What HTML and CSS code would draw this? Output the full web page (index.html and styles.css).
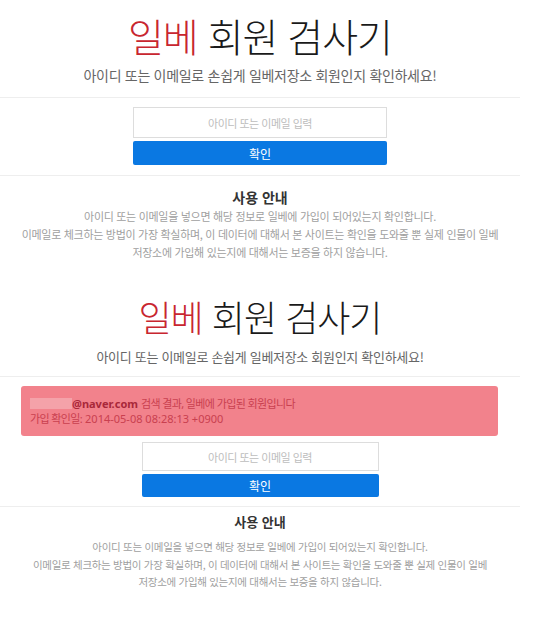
FILE: index.html
```html
<!DOCTYPE html>
<html lang="ko">
<head>
<meta charset="utf-8">
<title>일베 회원 검사기</title>
<link rel="stylesheet" href="styles.css">
</head>
<body>
<div class="page">
  <div class="shot shot-a">
    <header class="hero">
      <h1><span class="red">일베</span> 회원 검사기</h1>
      <p class="subtitle">아이디 또는 이메일로 손쉽게 일베저장소 회원인지 확인하세요!</p>
    </header>
    <form class="search">
      <input class="field" type="text" placeholder="아이디 또는 이메일 입력">
      <button class="btn" type="button">확인</button>
    </form>
    <section class="guide">
      <h2>사용 안내</h2>
      <p>아이디 또는 이메일을 넣으면 해당 정보로 일베에 가입이 되어있는지 확인합니다.<br>이메일로 체크하는 방법이 가장 확실하며, 이 데이터에 대해서 본 사이트는 확인을 도와줄 뿐 실제 인물이 일베<br>저장소에 가입해 있는지에 대해서는 보증을 하지 않습니다.</p>
    </section>
  </div>
  <div class="shot shot-b">
    <header class="hero">
      <h1><span class="red">일베</span> 회원 검사기</h1>
      <p class="subtitle">아이디 또는 이메일로 손쉽게 일베저장소 회원인지 확인하세요!</p>
    </header>
    <div class="alert">
      <div class="alert-line"><span class="redacted"></span><b>@naver.com</b> <span class="ko">검색 결과, 일베에 가입된 회원입니다</span></div>
      <div class="alert-line"><span class="ko">가입 확인일:</span> 2014-05-08 08:28:13 +0900</div>
    </div>
    <form class="search">
      <input class="field" type="text" placeholder="아이디 또는 이메일 입력">
      <button class="btn" type="button">확인</button>
    </form>
    <section class="guide">
      <h2>사용 안내</h2>
      <p>아이디 또는 이메일을 넣으면 해당 정보로 일베에 가입이 되어있는지 확인합니다.<br>이메일로 체크하는 방법이 가장 확실하며, 이 데이터에 대해서 본 사이트는 확인을 도와줄 뿐 실제 인물이 일베<br>저장소에 가입해 있는지에 대해서는 보증을 하지 않습니다.</p>
    </section>
  </div>
</div>
</body>
</html>
```
FILE: styles.css
```css
* { box-sizing: border-box; }
html, body { margin: 0; padding: 0; background: #fff; }
body {
  font-family: "Noto Sans", "Noto Sans CJK KR", sans-serif;
  color: #333;
}
.page { width: 520px; }

.hero { text-align: center; border-bottom: 1px solid #eee; }
.hero h1 {
  margin: 0;
  font-family: "Noto Sans CJK KR", sans-serif;
  font-weight: 300;
  color: #1a1a1a;
  letter-spacing: -1px;
}
.red { color: #c8262f; }
.subtitle {
  margin: 0;
  color: #666;
  font-family: "Noto Sans CJK KR", sans-serif;
}

.search {
  display: flex;
  flex-direction: column;
  align-items: center;
  gap: 3px;
  border-bottom: 1px solid #eee;
}
.field {
  display: block;
  border: 1px solid #ddd;
  background: #fff;
  text-align: center;
  font-family: "Noto Sans CJK KR", sans-serif;
  font-size: 11px;
  letter-spacing: -0.5px;
  outline: none;
  padding: 0;
}
.field::placeholder { color: #bdbdbd; }
.btn {
  display: block;
  border: 0;
  border-radius: 2px;
  background: #0a78e2;
  color: #fff;
  font-family: "Noto Sans CJK KR", sans-serif;
  font-size: 12px;
  padding: 0;
}

.guide { text-align: center; }
.guide h2 {
  margin: 0;
  font-family: "Noto Sans CJK KR", sans-serif;
  font-weight: 700;
  color: #333;
}
.guide p {
  margin: 0;
  color: #a0a0a0;
  font-family: "Noto Sans CJK KR", sans-serif;
  letter-spacing: -0.3px;
}

/* first screenshot */
.shot-a .hero { padding-bottom: 12px; }
.shot-a .hero h1 { font-size: 39px; line-height: 46px; padding-top: 12px; }
.shot-a .subtitle { font-size: 14px; line-height: 20px; margin-top: 7px; letter-spacing: -0.3px; }
.shot-a .search { padding: 9px 0 10px; }
.shot-a .field { width: 254px; height: 31px; }
.shot-a .btn { width: 254px; height: 24px; }
.shot-a .guide { padding-top: 11px; padding-bottom: 6px; }
.shot-a .guide h2 { font-size: 14px; line-height: 20px; }
.shot-a .guide p { font-size: 11px; line-height: 18px; }

/* second screenshot */
.shot-b .hero { padding-bottom: 10px; }
.shot-b .hero h1 { font-size: 36px; line-height: 42px; padding-top: 28px; }
.shot-b .subtitle { font-size: 13px; line-height: 18px; margin-top: 11px; letter-spacing: -0.3px; }
.alert {
  margin: 9px 22px 0 21px;
  padding: 10px 9px;
  background: #f2828c;
  border-radius: 3px;
  color: #c9404f;
  font-size: 11px;
  line-height: 15px;
}
.alert-line { white-space: nowrap; height: 15px; }
.alert .ko { letter-spacing: -0.6px; }
.alert b { color: #a8283a; font-weight: 700; }
.redacted {
  display: inline-block;
  width: 42px;
  height: 11px;
  vertical-align: -1px;
  background: #f4a2a9;
}
.shot-b .search { padding: 6px 0 9px; }
.shot-b .field { width: 237px; height: 29px; }
.shot-b .btn { width: 237px; height: 23px; }
.shot-b .guide { padding-top: 6px; }
.shot-b .guide h2 { font-size: 13px; line-height: 18px; }
.shot-b .guide p { font-size: 10.5px; line-height: 17.5px; margin-top: 7px; }
```
